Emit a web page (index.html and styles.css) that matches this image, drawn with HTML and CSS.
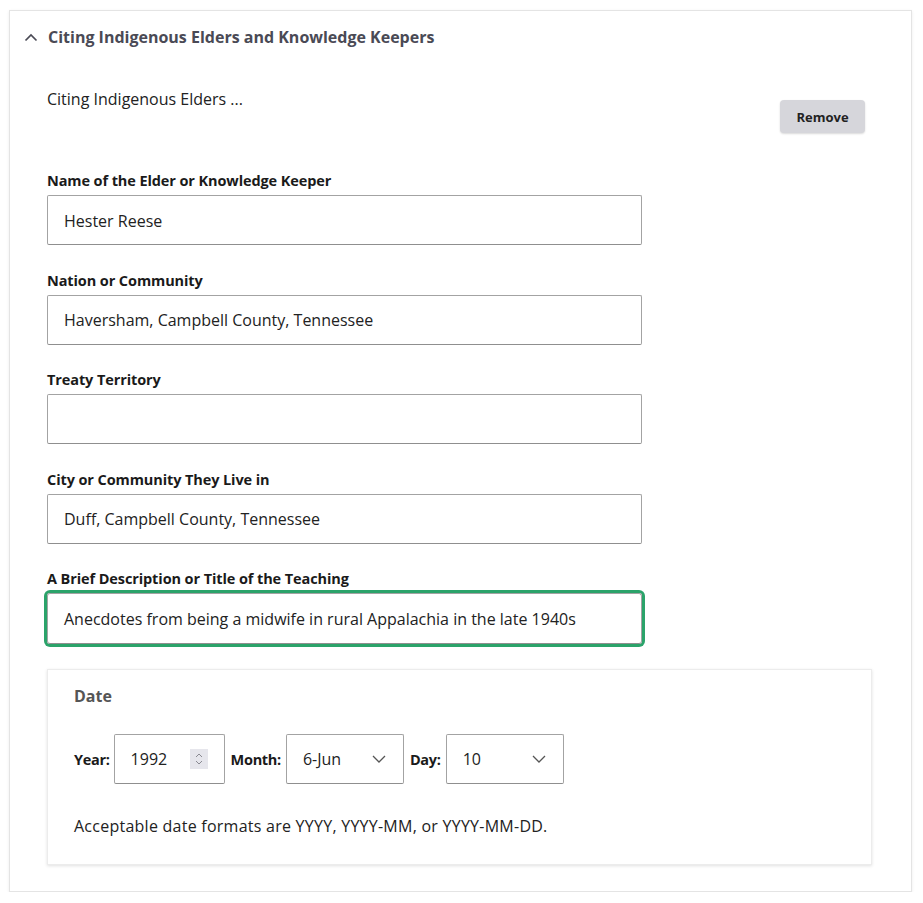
FILE: index.html
```html
<!DOCTYPE html>
<html>
<head>
<meta charset="utf-8">
<link rel="stylesheet" href="styles.css">
</head>
<body>
<section class="card">
  <header class="card-header">
    <svg class="chev-up" width="14" height="9" viewBox="0 0 14 9"><path d="M1.5 7.5 L7 2 L12.5 7.5" fill="none" stroke="#4a4a55" stroke-width="1.7"/></svg>
    <h2 class="card-title">Citing Indigenous Elders and Knowledge Keepers</h2>
  </header>
  <div class="card-body">
    <div class="summary-row">
      <p class="summary">Citing Indigenous Elders ...</p>
      <button class="btn-remove">Remove</button>
    </div>

    <div class="field">
      <label class="field-label">Name of the Elder or Knowledge Keeper</label>
      <div class="text-input">Hester Reese</div>
    </div>
    <div class="field">
      <label class="field-label">Nation or Community</label>
      <div class="text-input">Haversham, Campbell County, Tennessee</div>
    </div>
    <div class="field">
      <label class="field-label">Treaty Territory</label>
      <div class="text-input"></div>
    </div>
    <div class="field">
      <label class="field-label">City or Community They Live in</label>
      <div class="text-input">Duff, Campbell County, Tennessee</div>
    </div>
    <div class="field">
      <label class="field-label">A Brief Description or Title of the Teaching</label>
      <div class="text-input focused">Anecdotes from being a midwife in rural Appalachia in the late 1940s</div>
    </div>

    <div class="date-box">
      <h3 class="date-title">Date</h3>
      <div class="date-row">
        <span class="date-label">Year:</span>
        <div class="num-input">
          <span>1992</span>
          <span class="spinner">
            <svg width="8" height="14" viewBox="0 0 8 14"><path d="M1 5 L4 2 L7 5 M1 9 L4 12 L7 9" fill="none" stroke="#8a8a92" stroke-width="1"/></svg>
          </span>
        </div>
        <span class="date-label">Month:</span>
        <div class="select">
          <span>6-Jun</span>
          <svg width="14" height="8" viewBox="0 0 14 8"><path d="M1 1 L7 7 L13 1" fill="none" stroke="#555" stroke-width="1.3"/></svg>
        </div>
        <span class="date-label">Day:</span>
        <div class="select">
          <span>10</span>
          <svg width="14" height="8" viewBox="0 0 14 8"><path d="M1 1 L7 7 L13 1" fill="none" stroke="#555" stroke-width="1.3"/></svg>
        </div>
      </div>
      <p class="date-help">Acceptable date formats are YYYY, YYYY-MM, or YYYY-MM-DD.</p>
    </div>
  </div>
</section>
</body>
</html>
```

FILE: styles.css
```css
* { box-sizing: border-box; }
html, body { margin: 0; padding: 0; background: #fff; }
body {
  font-family: "Open Sans", "Noto Sans", sans-serif;
  color: #222;
  font-size: 16px;
}
.card {
  margin: 10px 11px 0 9px;
  height: 882px;
  border: 1px solid #e4e4e4;
  box-shadow: 0 1px 3px rgba(0,0,0,0.08);
  background: #fff;
}
.card-header {
  display: flex;
  padding: 15px 0 0 14px;
  height: 52px;
  align-items: flex-start;
}
.chev-up { margin-top: 7px; margin-right: 10px; }
.card-title {
  margin: 0;
  font-size: 16px;
  line-height: 22px;
  font-weight: 700;
  color: #4a4a55;
}
.card-body {
  padding: 25px 38px 0 37px;
}
.summary-row {
  display: flex;
  justify-content: space-between;
  align-items: flex-start;
}
.summary {
  margin: 0;
  line-height: 22px;
  font-size: 16px;
  color: #222;
}
.btn-remove {
  margin-top: 12px;
  margin-right: 8px;
  width: 85px;
  height: 33px;
  border: none;
  border-radius: 4px;
  background: #d6d6db;
  box-shadow: 0 1px 2px rgba(0,0,0,0.15);
  font-family: inherit;
  font-weight: 700;
  font-size: 13px;
  color: #222;
  padding: 0;
}
.field { margin-top: 25.5px; }
.summary-row + .field { margin-top: 38px; }
.field-label {
  display: block;
  font-size: 14.5px;
  line-height: 20px;
  font-weight: 700;
  color: #1a1a1a;
  letter-spacing: -0.1px;
  margin-bottom: 4px;
}
.text-input {
  width: 595px;
  height: 50px;
  border: 1px solid #a3a3a3;
  border-bottom-color: #8f8f8f;
  border-radius: 2px;
  padding: 1px 16px 0;
  display: flex;
  align-items: center;
  font-size: 16px;
  color: #222;
}
.text-input.focused {
  height: 51px;
  border-radius: 3px;
  box-shadow: 0 0 0 3px #2ba36a;
}
.date-box {
  margin-top: 25px;
  width: 825px;
  height: 196px;
  border: 1px solid #ececec;
  box-shadow: 0 1px 3px rgba(0,0,0,0.12);
  padding: 15px 26px 0 26px;
}
.date-title {
  margin: 0;
  font-size: 16px;
  line-height: 22px;
  font-weight: 700;
  color: #555;
}
.date-row {
  margin-top: 27px;
  display: flex;
  align-items: center;
}
.date-label {
  font-weight: 700;
  font-size: 14.5px;
  color: #1a1a1a;
  letter-spacing: -0.3px;
  margin-right: 5px;
}
.date-label:first-child { margin-right: 4px; }
.num-input, .select {
  height: 50px;
  border: 1px solid #a3a3a3;
  border-bottom-color: #8f8f8f;
  border-radius: 2px;
  display: flex;
  align-items: center;
  justify-content: space-between;
  padding: 0 16px;
  font-size: 16px;
  color: #222;
  margin-right: 6px;
}
.num-input { width: 111px; }
.spinner {
  width: 18px;
  height: 20px;
  background: #e6e6ec;
  display: flex;
  align-items: center;
  justify-content: center;
}
.select { width: 118px; padding-right: 17px; }
.date-help {
  margin: 31px 0 0 0;
  font-size: 16px;
  line-height: 22px;
  color: #222;
  letter-spacing: 0.25px;
}
```
